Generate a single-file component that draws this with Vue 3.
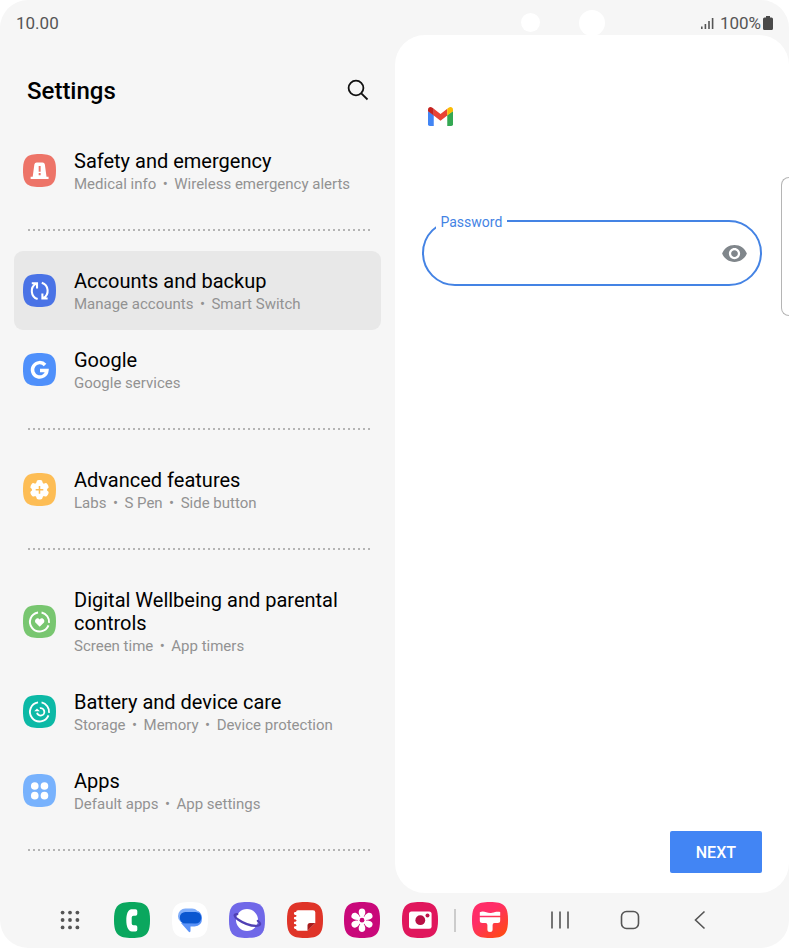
<script setup>
import { ref } from 'vue'

const squircle = 'M18 0C32 0 36 4 36 18S32 36 18 36 0 32 0 18 4 0 18 0Z'
const password = ref('')
const reveal = ref(false)
const selected = ref('accounts')

const groups = [
  [{ id: 'safety', title: 'Safety and emergency', notes: ['Medical info', 'Wireless emergency alerts'], color: '#ed7468' }],
  [
    { id: 'accounts', title: 'Accounts and backup', notes: ['Manage accounts', 'Smart Switch'], color: '#4a73e6' },
    { id: 'google', title: 'Google', notes: ['Google services'], color: '#4f90fb' }
  ],
  [{ id: 'advanced', title: 'Advanced features', notes: ['Labs', 'S Pen', 'Side button'], color: '#fdbd55' }],
  [
    { id: 'wellbeing', title: 'Digital Wellbeing and parental controls', notes: ['Screen time', 'App timers'], color: '#78c670' },
    { id: 'care', title: 'Battery and device care', notes: ['Storage', 'Memory', 'Device protection'], color: '#0cb9a6' },
    { id: 'apps', title: 'Apps', notes: ['Default apps', 'App settings'], color: '#78b2fd' }
  ]
]
const petals = [0, 60, 120, 180, 240, 300]
</script>

<template>
  <div class="screen">
    <header class="status">
      <time>10.00</time>
      <div class="status-right">
        <svg class="signal" viewBox="0 0 14 14" aria-hidden="true">
          <path d="M1 10.500h1.600v2.500H1zM4.600 8h1.600v5H4.600zM8.200 5h1.600v8H8.200zM11.800 2h1.600v11h-1.600z" fill="#555" />
        </svg>
        <span>100%</span>
        <svg class="battery" viewBox="0 0 10 14" aria-hidden="true">
          <path d="M3 0h4v1.500h1.500Q10 1.500 10 3v9.500Q10 14 8.500 14h-7Q0 14 0 12.500V3Q0 1.500 1.500 1.500H3z" fill="#4a4a4a" />
        </svg>
      </div>
      <i class="lens small"></i>
      <i class="lens large"></i>
    </header>

    <main class="panes">
      <section class="settings">
        <div class="heading">
          <h1>Settings</h1>
          <button class="plain" type="button" aria-label="Search">
            <svg width="22" height="24" viewBox="0 0 22 24" fill="none" stroke="#111" stroke-width="1.8">
              <circle cx="9" cy="9" r="7.400" />
              <path d="M14.300 14.300L20.500 20.500" />
            </svg>
          </button>
        </div>
        <nav class="list">
          <div v-for="(group, g) in groups" :key="g" class="group">
            <a
              v-for="row in group"
              :key="row.id"
              href="#"
              class="row"
              :class="{ active: row.id === selected }"
              @click.prevent="selected = row.id"
            >
              <svg class="row-icon" viewBox="0 0 32 32" aria-hidden="true">
                <path :d="squircle" :fill="row.color" transform="scale(.8889)" />
                <g v-if="row.id === 'safety'">
                  <path d="M9.400 22L11 10.300Q11.300 8.300 13.300 8.300H18.900Q20.900 8.300 21.200 10.300L22.800 22H24.800V24.200H7.400V22Z" fill="#fff" />
                  <path d="M15.200 11.600h1.900v5.600h-1.900zM15.200 18.500h1.900v2h-1.900z" :fill="row.color" />
                </g>
                <g v-else-if="row.id === 'accounts'" fill="none" stroke="#fff" stroke-width="2">
                  <path d="M14.200 24.300A8.200 8.200 0 0 1 12.800 9.300M8.500 9H13.600V14" />
                  <path d="M14.200 24.300A8.200 8.200 0 0 1 12.800 9.300M8.500 9H13.600V14" transform="rotate(180 16.200 16.400)" />
                </g>
                <path
                  v-else-if="row.id === 'google'"
                  d="M21.400 11.600A7 7 0 1 0 23.200 16.900H16.500"
                  fill="none"
                  stroke="#fff"
                  stroke-width="3.400"
                />
                <g v-else-if="row.id === 'advanced'">
                  <circle cx="16" cy="16.300" r="7.400" fill="#fff" />
                  <rect v-for="a in petals" :key="a" x="13" y="6.900" width="6" height="6" rx="2.200" fill="#fff" :transform="`rotate(${a} 16 16.300)`" />
                  <path d="M16 12.600v7.400M12.300 16.300h7.400" :stroke="row.color" stroke-width="1.500" />
                </g>
                <g v-else-if="row.id === 'wellbeing'">
                  <path d="M18 7.200A9.300 9.300 0 0 1 25.200 17.400M24.700 19.800A9.300 9.300 0 1 1 14.600 7.200" fill="none" stroke="#fff" stroke-width="1.900" />
                  <path d="M16.200 21.200L12.300 17.300C10.200 14.800 14 10.800 16.200 14C18.400 10.800 22.200 14.800 20.100 17.300Z" fill="#fff" />
                </g>
                <g v-else-if="row.id === 'care'" fill="none" stroke="#fff" stroke-width="1.800">
                  <path d="M18 7.200A9.300 9.300 0 0 1 25.200 17.400M24.700 19.800A9.300 9.300 0 1 1 14.600 7.200" />
                  <path d="M16.300 12.800A3.600 3.600 0 1 1 13.600 17.200" />
                  <path d="M10.900 15.700L13.600 13.200L16.300 15.700Z" fill="#fff" stroke="none" />
                </g>
                <g v-else fill="#fff">
                  <circle cx="11.400" cy="11.600" r="3.700" />
                  <circle cx="20.800" cy="11.600" r="3.700" />
                  <circle cx="11.400" cy="21" r="3.700" />
                  <circle cx="20.800" cy="21" r="3.700" />
                </g>
              </svg>
              <span class="row-text">
                <span class="title">{{ row.title }}</span>
                <span class="notes">
                  <span v-for="note in row.notes" :key="note" class="note">{{ note }}</span>
                </span>
              </span>
            </a>
          </div>
        </nav>
      </section>

      <form class="account" @submit.prevent>
        <svg class="gmail" viewBox="0 0 50 38" role="img" aria-label="Gmail">
          <path d="M0 8L11.500 16V38H3.500Q0 38 0 34.500Z" fill="#4285f4" />
          <path d="M50 8L38.500 16V38H46.500Q50 38 50 34.500Z" fill="#34a853" />
          <path d="M11.500 3.500L25 14L38.500 3.500V17L25 27.500L11.500 17Z" fill="#ea4335" />
          <path d="M0 8.500V5C0 .4 5-1.500 8.800 1.400L11.500 3.500V17Z" fill="#c5221f" />
          <path d="M50 8.500V5C50 .4 45-1.500 41.200 1.400L38.500 3.500V17Z" fill="#fbbc04" />
        </svg>
        <div class="field">
          <label for="password">Password</label>
          <input id="password" v-model="password" :type="reveal ? 'text' : 'password'" />
          <button class="plain" type="button" aria-label="Show password" @click="reveal = !reveal">
            <svg width="27" height="27" viewBox="0 0 24 24">
              <path d="M12 4.500C7 4.500 2.730 7.610 1 12c1.730 4.390 6 7.500 11 7.500s9.270-3.110 11-7.500c-1.730-4.390-6-7.500-11-7.500zM12 17c-2.760 0-5-2.240-5-5s2.240-5 5-5 5 2.240 5 5-2.240 5-5 5zm0-8c-1.660 0-3 1.340-3 3s1.340 3 3 3 3-1.340 3-3-1.340-3-3-3z" fill="#80868b" />
            </svg>
          </button>
        </div>
        <button class="next" type="submit">NEXT</button>
      </form>
    </main>

    <footer class="dock">
      <button class="plain" type="button" aria-label="All apps">
        <svg width="22" height="22" viewBox="0 0 22 22" fill="#555">
          <template v-for="y in 3" :key="y">
            <circle v-for="x in 3" :key="x" :cx="x * 7.400 - 3.800" :cy="y * 7.400 - 3.800" r="1.900" />
          </template>
        </svg>
      </button>
      <div class="apps">
        <button class="plain" type="button" aria-label="Phone">
          <svg class="app" viewBox="0 0 36 36">
            <path :d="squircle" fill="#0aa75e" />
            <path d="M17 7.300H21.500Q23.300 7.300 23.300 9.100V12Q23.300 13.800 21.500 13.800H19.500Q17.700 13.800 17.700 15.600V21.400Q17.700 23.200 19.500 23.200H21.500Q23.300 23.200 23.300 25V27.800Q23.300 29.600 21.500 29.600H18C14 28.800 12.300 24 12.300 18.400C12.300 12.500 13.800 8 17 7.300Z" fill="#fff" />
          </svg>
        </button>
        <button class="plain" type="button" aria-label="Messages">
          <svg class="app" viewBox="0 0 36 36">
            <path :d="squircle" fill="#fff" />
            <path d="M9 21L16.500 29.500Q18.500 31.200 18.500 28.500V24.500H22.500Q30 24 30 16.500Q30 11 26 9Z" fill="#5b93f8" />
            <rect x="6" y="6.500" width="21.500" height="15" rx="7.300" fill="#80aefa" />
            <rect x="7.800" y="10" width="21.400" height="11.500" rx="5.500" fill="#0b57d0" />
          </svg>
        </button>
        <button class="plain" type="button" aria-label="Internet">
          <svg class="app" viewBox="0 0 36 36">
            <path :d="squircle" fill="#7068e8" />
            <circle cx="18" cy="18" r="11" fill="#fff" />
            <path d="M8.300 12.200C4.500 11.800 4.800 14.500 9 17.500C14 21 21 23.800 27 23.900C32 23.900 32.300 21.300 28.800 18.800" fill="none" stroke="#5040b4" stroke-width="2.200" stroke-linecap="round" />
          </svg>
        </button>
        <button class="plain" type="button" aria-label="Notes">
          <svg class="app" viewBox="0 0 36 36">
            <path :d="squircle" fill="#df3428" />
            <path d="M11 8.300H26Q28.300 8.300 28.300 10.500V21L20.500 28.700H11Q9 28.700 9 26.700V10.300Q9 8.300 11 8.300Z" fill="#fff" />
            <path d="M28.300 21L20.500 28.700V23.500Q20.500 21 23 21Z" fill="#a91c1c" />
            <path d="M8.300 11.500H11M8.300 16.200H11M8.300 20.900H11M8.300 25.600H11" stroke="#fff" stroke-width="2.800" stroke-linecap="round" />
            <path d="M7 13.850H9M7 18.550H9M7 23.250H9" stroke="#df3428" stroke-width="1.200" stroke-linecap="round" />
          </svg>
        </button>
        <button class="plain" type="button" aria-label="Gallery">
          <svg class="app" viewBox="0 0 36 36">
            <path :d="squircle" fill="#c9087a" />
            <path v-for="a in petals" :key="a" d="M18 17C15.500 14 14.300 11.500 14.800 9C15.400 5.700 20.600 5.700 21.200 9C21.700 11.500 20.500 14 18 17Z" fill="#fff" :transform="`rotate(${a} 18 18.200)`" />
            <circle cx="18" cy="18.200" r="4" fill="#fff" />
            <circle cx="18" cy="18.200" r="2.400" fill="#c9087a" />
          </svg>
        </button>
        <button class="plain" type="button" aria-label="Camera">
          <svg class="app" viewBox="0 0 36 36">
            <path :d="squircle" fill="#e0165c" />
            <rect x="7" y="9.500" width="22.600" height="17.300" rx="2.500" fill="#fff" />
            <circle cx="18.300" cy="18.200" r="4.900" fill="#b80f45" />
            <circle cx="25.500" cy="13.500" r="2" fill="#c01248" />
          </svg>
        </button>
      </div>
      <span class="divider"></span>
      <button class="plain" type="button" aria-label="Themes">
        <svg class="app" viewBox="0 0 36 36">
          <defs>
            <linearGradient id="theme-fill" x1="0" y1="0" x2=".8" y2="1">
              <stop offset=".4" stop-color="#ff2d68" />
              <stop offset="1" stop-color="#ff4a14" />
            </linearGradient>
          </defs>
          <path :d="squircle" fill="url(#theme-fill)" />
          <path d="M7.800 10.300C12 8 15 11.800 20 10.800C23 10.200 25 9.300 28.200 10V13.700H7.800Z" fill="#fff" />
          <path d="M7.800 15.200H28.200V18.500Q28.200 21 25.700 21H22.500Q20.600 21 20.600 23V27.500Q20.600 30 18 30T15.400 27.500V23Q15.400 21 13.500 21H10.300Q7.800 21 7.800 18.500Z" fill="#fff" />
        </svg>
      </button>
      <div class="keys">
        <button class="plain" type="button" aria-label="Recents">
          <svg width="22" height="22" viewBox="0 0 22 22" stroke="#555" stroke-width="1.600"><path d="M3 2.500v17M11 2.500v17M19 2.500v17" /></svg>
        </button>
        <button class="plain" type="button" aria-label="Home">
          <svg width="22" height="22" viewBox="0 0 22 22" fill="none" stroke="#555" stroke-width="1.600"><rect x="2.500" y="2.500" width="17" height="17" rx="5" /></svg>
        </button>
        <button class="plain" type="button" aria-label="Back">
          <svg width="22" height="22" viewBox="0 0 22 22" fill="none" stroke="#555" stroke-width="1.600"><path d="M15.500 2.500L6.500 11l9 8.500" /></svg>
        </button>
      </div>
    </footer>
    <i class="edge-handle"></i>
  </div>
</template>

<style>
body {
  margin: 0;
  background: #fff;
}
</style>

<style scoped>
.screen {
  position: relative;
  display: flex;
  flex-direction: column;
  min-height: 100vh;
  overflow: hidden;
  border-radius: 28px;
  background: #f6f6f6;
  color: #000;
  font-family: Roboto, sans-serif;
}
svg {
  display: block;
}
.plain {
  display: block;
  padding: 0;
  border: 0;
  background: none;
  cursor: pointer;
}
.status {
  position: relative;
  display: flex;
  align-items: center;
  justify-content: space-between;
  padding: 13px 16px 2px;
  color: #555;
  font-size: 17px;
  line-height: 20px;
}
.status-right {
  display: flex;
  align-items: center;
}
.signal {
  width: 14px;
  height: 14px;
  margin-right: 6px;
}
.battery {
  width: 10px;
  height: 14px;
  margin-left: 2px;
}
.lens {
  position: absolute;
  border-radius: 50%;
  background: #fff;
}
.small {
  top: 13px;
  left: 66%;
  width: 19px;
  height: 19px;
}
.large {
  top: 10px;
  left: 73.400%;
  width: 26px;
  height: 26px;
}
.panes {
  flex: 1;
  display: grid;
  grid-template-columns: 1fr 1fr;
}
.heading {
  display: flex;
  align-items: center;
  justify-content: space-between;
  padding: 40px 26px 24px 27px;
}
h1 {
  margin: 0;
  font-size: 24px;
  font-weight: 500;
  line-height: 32px;
}
.list {
  padding: 0 14px;
}
.group::after {
  content: '';
  display: block;
  height: 2px;
  margin: 19px 10px 20px 14px;
  background: repeating-linear-gradient(90deg, #b4b4b4 0 2px, transparent 2px 5px);
}
.row {
  display: flex;
  align-items: center;
  gap: 18px;
  padding: 0 10px 0 9px;
  border-radius: 9px;
  color: inherit;
  text-decoration: none;
}
.active {
  background: #e8e8e8;
}
.row-icon {
  flex: none;
  width: 33px;
  height: 33px;
}
.row-text {
  display: block;
  padding: 19px 0 14px;
}
.title {
  display: block;
  font-size: 20px;
  line-height: 23px;
}
.notes {
  display: flex;
  flex-wrap: wrap;
  color: #929292;
  font-size: 15px;
  line-height: 23px;
}
.note {
  display: flex;
}
.note + .note::before {
  content: '•';
  width: 18px;
  text-align: center;
}
.account {
  display: flex;
  flex-direction: column;
  padding: 72px 27px 20px;
  border-radius: 30px;
  background: #fff;
}
.gmail {
  width: 25px;
  height: 19px;
  margin-left: 6px;
}
.field {
  position: relative;
  display: flex;
  align-items: center;
  margin-top: 94px;
  padding-right: 12px;
  border: 2px solid #4483e4;
  border-radius: 34px;
}
.field label {
  position: absolute;
  top: -8px;
  left: 12px;
  padding: 0 5px;
  background: #fff;
  color: #4483e4;
  font-size: 14px;
  line-height: 16px;
}
.field input {
  flex: 1;
  min-width: 0;
  height: 62px;
  padding: 0 20px;
  border: 0;
  outline: 0;
  background: none;
  font: 17px Roboto, sans-serif;
}
.next {
  align-self: flex-end;
  margin-top: auto;
  padding: 12px 26px 10px;
  border: 0;
  border-radius: 2px;
  background: #4285f4;
  color: #fff;
  font: 500 16px/20px Roboto, sans-serif;
}
.dock {
  display: flex;
  align-items: center;
  padding: 9px 78px 10px 59px;
}
.apps {
  flex: 1;
  display: flex;
  justify-content: space-between;
  margin-left: 33px;
}
.app {
  width: 36px;
  height: 36px;
}
.divider {
  width: 2px;
  height: 23px;
  margin: 0 16px;
  background: #ccc;
}
.keys {
  display: flex;
  gap: 48px;
  margin-left: 41px;
}
.edge-handle {
  position: absolute;
  top: 177px;
  right: 0;
  width: 7px;
  height: 137px;
  border: 1px solid #b5b5b5;
  border-right: 0;
  border-radius: 8px 0 0 8px;
  background: #fff;
}
</style>
